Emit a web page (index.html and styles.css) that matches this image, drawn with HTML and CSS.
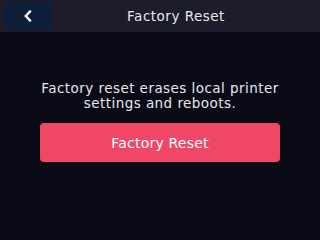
FILE: index.html
```html
<!DOCTYPE html>
<html lang="en">
<head>
    <meta charset="UTF-8">
    <meta name="viewport" content="width=device-width, initial-scale=1.0">
    <title>Factory Reset</title>
    <link rel="stylesheet" href="styles.css">
</head>
<body>
    <header class="topbar">
        <button class="back-btn" type="button" aria-label="Back">
            <svg width="10" height="12" viewBox="0 0 10 12">
                <path d="M7 1.5 L2.8 6 L7 10.5" fill="none" stroke="#ffffff" stroke-width="2.4" stroke-linecap="square"/>
            </svg>
        </button>
        <h1 class="title">Factory Reset</h1>
    </header>
    <main class="content">
        <p class="message">Factory reset erases local printer settings and reboots.</p>
        <button class="reset-btn" type="button">Factory Reset</button>
    </main>
</body>
</html>
```

FILE: styles.css
```css
body {
    margin: 0;
    padding: 0;
    width: 320px;
    height: 240px;
    overflow: hidden;
    background-color: #0b0b18;
    font-family: "DejaVu Sans", sans-serif;
    color: #e6e6ea;
}

.topbar {
    height: 32px;
    background-color: #1c1c2a;
    display: flex;
    align-items: center;
    padding: 0 4px;
    box-sizing: border-box;
}

.back-btn {
    width: 48px;
    height: 28px;
    border: none;
    border-radius: 4px;
    background-color: #0d1f38;
    display: flex;
    align-items: center;
    justify-content: center;
    padding: 0;
}

.title {
    flex: 1;
    margin: 0;
    padding-right: 16px;
    text-align: center;
    font-size: 13.5px;
    font-weight: normal;
    letter-spacing: 0.5px;
    color: #e8e8ec;
}

.content {
    display: flex;
    flex-direction: column;
    align-items: center;
    padding-top: 49px;
}

.message {
    margin: 0;
    width: 250px;
    text-align: center;
    font-size: 13.5px;
    line-height: 15px;
    letter-spacing: 0.45px;
}

.reset-btn {
    margin-top: 12px;
    width: 240px;
    height: 39px;
    border: none;
    border-radius: 4px;
    background-color: #f04767;
    color: #ffffff;
    font-family: "DejaVu Sans", sans-serif;
    font-size: 14px;
    letter-spacing: 0.2px;
}
```
